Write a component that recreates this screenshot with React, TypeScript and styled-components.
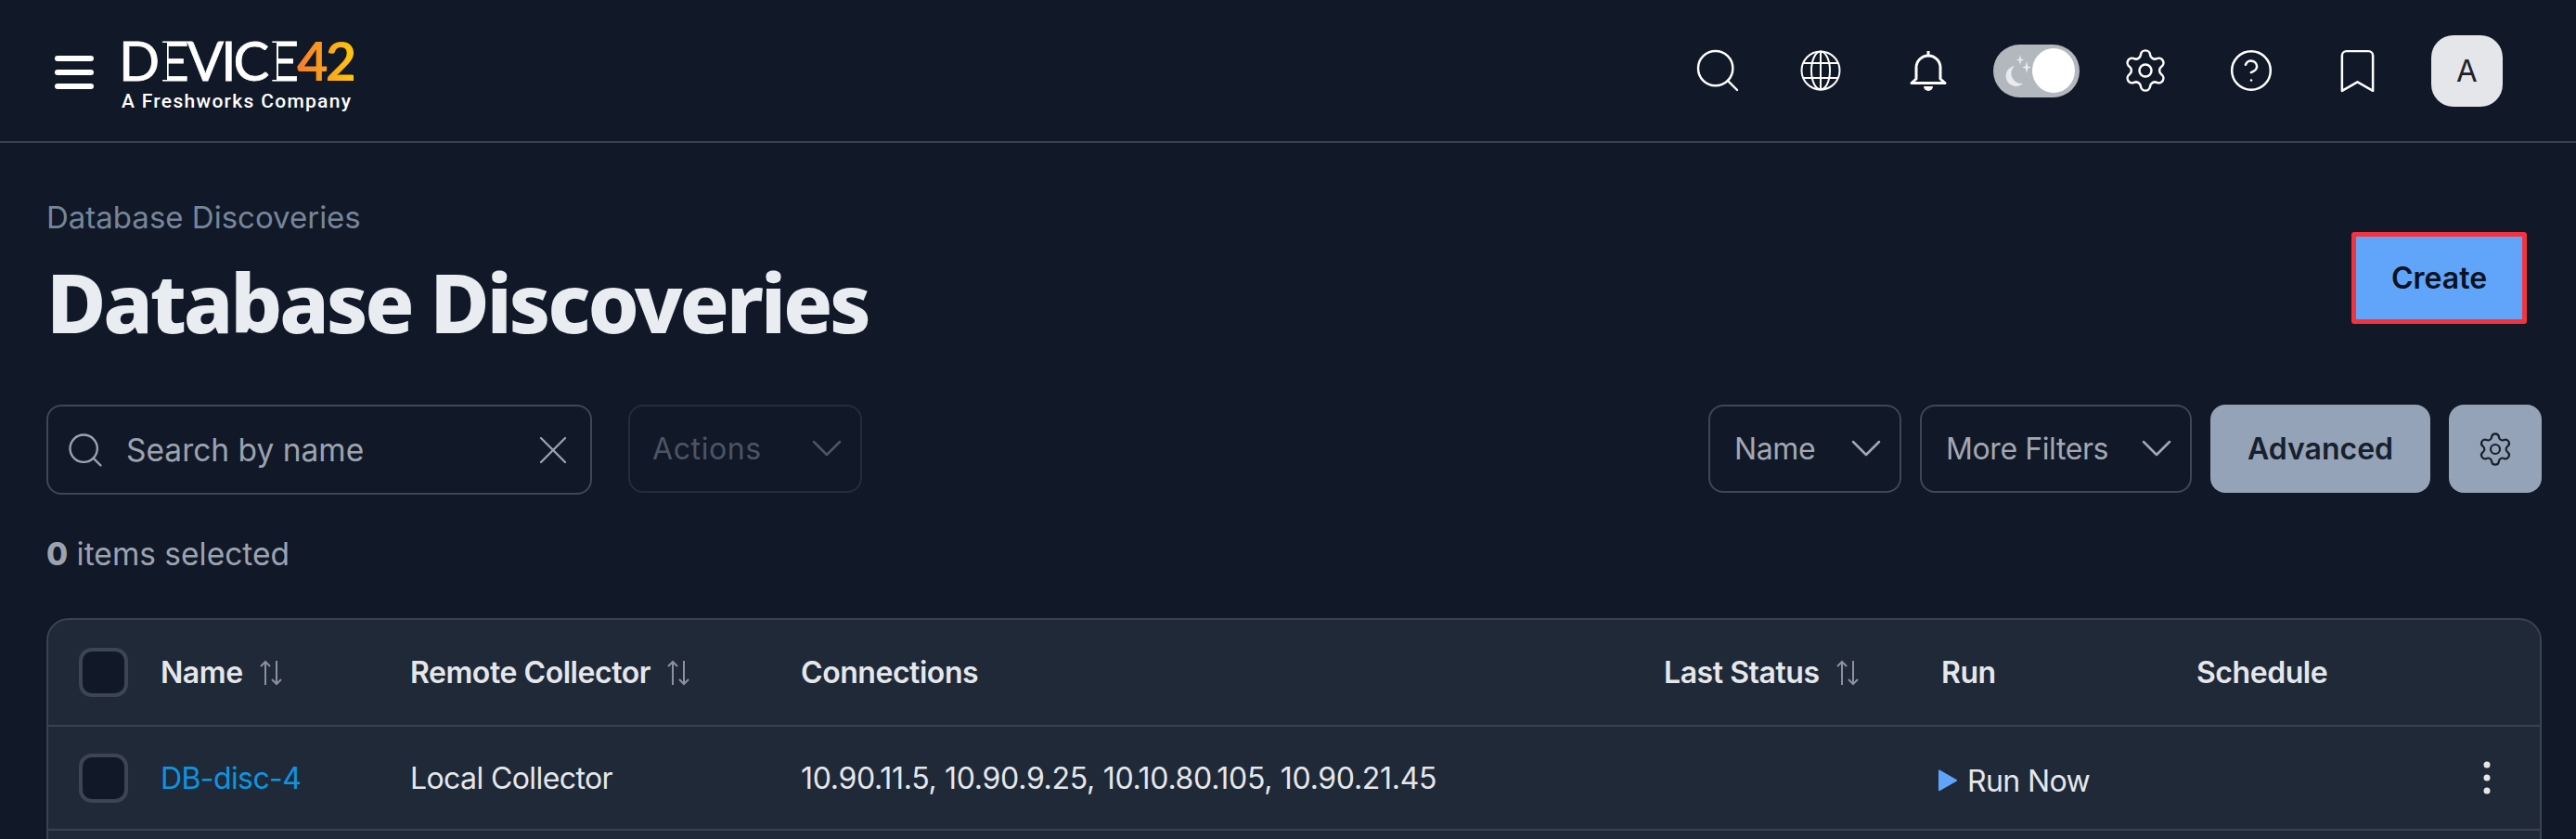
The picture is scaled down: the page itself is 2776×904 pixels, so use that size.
import React from 'react';
import styled, { createGlobalStyle } from 'styled-components';
import { ChevronDown, CircleHelp, Bookmark, Search, Settings, X } from 'lucide-react';

const GlobalStyle = createGlobalStyle`
    html, body {
        margin: 0;
        height: 904px;
        overflow: hidden;
        background: #111827;
    }
    * {
        box-sizing: border-box;
    }
    svg {
        flex-shrink: 0;
    }
`;

const Page = styled.div`
    width: 2776px;
    height: 904px;
    overflow: hidden;
    background: #111827;
    color: #e5e7eb;
    font-family: 'Inter', 'Liberation Sans', sans-serif;
`;

const Header = styled.header`
    display: flex;
    align-items: center;
    justify-content: space-between;
    height: 154px;
    padding: 0 79px 0 59px;
    border-bottom: 2px solid #3a4150;
`;

const Brand = styled.div`
    display: flex;
    align-items: center;
    gap: 30px;
`;

const Burger = styled.div`
    display: grid;
    gap: 9px;
    width: 42px;
    margin-top: 4px;
`;

const BurgerBar = styled.span`
    display: block;
    height: 6px;
    border-radius: 3px;
    background: #fff;
`;

const Logo = styled.div`
    display: flex;
    flex-direction: column;
    width: 252px;
    margin-top: 8px;
`;

const LogoMark = styled.div`
    display: flex;
    align-items: baseline;
    height: 50px;
    margin-left: -3px;
    line-height: 50px;
    font-family: 'Lato', sans-serif;
    font-size: 58px;
    font-weight: 400;
    color: #fff;
    letter-spacing: -2.900px;
    -webkit-text-stroke: 0.8px #fff;
`;

const LogoE = styled.span`
    position: relative;
    margin: 0 1px;

    &::before {
        content: '';
        position: absolute;
        left: 2px;
        top: 6px;
        bottom: 4px;
        width: 8px;
        background: #111827;
    }
`;

const LogoNumber = styled.span`
    font-weight: 700;
    background: linear-gradient(90deg, #f47c2c 0%, #ffc60b 100%);
    -webkit-background-clip: text;
    background-clip: text;
    color: transparent;
    -webkit-text-stroke: 0;
`;

const LogoTag = styled.div`
    margin-top: 7px;
    font-family: 'Roboto', sans-serif;
    font-size: 21px;
    font-weight: 500;
    letter-spacing: 1.300px;
    white-space: nowrap;
    color: #fff;
`;

const Tools = styled.div`
    display: flex;
    align-items: center;
`;

const ToolSlot = styled.div<{ $gap: number }>`
    display: flex;
    justify-content: center;
    width: 44px;
    margin-left: ${(p) => p.$gap}px;
    color: #fff;
`;

const Toggle = styled.div`
    display: flex;
    align-items: center;
    justify-content: space-between;
    width: 93px;
    height: 57px;
    margin-left: 48px;
    padding: 0 5px 0 12px;
    border-radius: 29px;
    background: #b3b7be;
`;

const ToggleKnob = styled.span`
    width: 48px;
    height: 48px;
    border-radius: 50%;
    background: #fff;
`;

const Avatar = styled.div`
    display: flex;
    align-items: center;
    justify-content: center;
    width: 77px;
    height: 77px;
    margin-left: 58px;
    border-radius: 24px;
    background: #e5e6ea;
    color: #1f2328;
    font-size: 33px;
    font-weight: 400;
`;

const Content = styled.main`
    padding: 60px 37px 0 50px;
`;

const TitleRow = styled.div`
    display: flex;
    justify-content: space-between;
    align-items: flex-start;
`;

const Crumb = styled.div`
    font-size: 33px;
    line-height: 40px;
    color: #76869a;
`;

const Title = styled.h1`
    margin: 18px 0 0;
    font-family: 'Noto Sans', sans-serif;
    font-size: 88px;
    line-height: 106px;
    font-weight: 800;
    letter-spacing: -3.200px;
    color: #e9ecf1;
`;

const CreateButton = styled.button`
    width: 189px;
    height: 99px;
    margin: 36px 16px 0 0;
    border: 5px solid #f5333f;
    border-radius: 3px;
    background: #60a5fa;
    color: #0b1220;
    font-family: inherit;
    font-size: 32px;
    font-weight: 600;
`;

const Controls = styled.div`
    display: flex;
    align-items: flex-start;
    justify-content: space-between;
    margin-top: 58px;
`;

const ControlGroup = styled.div`
    display: flex;
    align-items: flex-start;
    gap: 20px;
`;

const LeftGroup = styled(ControlGroup)`
    gap: 39px;
`;

const SearchBox = styled.div`
    display: flex;
    align-items: center;
    width: 588px;
    height: 97px;
    padding: 0 14px 0 18px;
    border: 2px solid #3f4654;
    border-radius: 16px;
    color: #9ca3af;
    font-size: 33.500px;
`;

const SearchText = styled.span`
    flex: 1;
    margin-left: 22px;
`;

const Select = styled.div<{ $w: number; $muted?: boolean }>`
    display: flex;
    align-items: center;
    justify-content: space-between;
    width: ${(p) => p.$w}px;
    height: 95px;
    padding: 0 8px 1px 26px;
    border: 2px solid ${(p) => (p.$muted ? '#262d3a' : '#3f4654')};
    border-radius: 16px;
    color: ${(p) => (p.$muted ? '#4b5563' : '#a3a8b1')};
    font-size: 32px;
    letter-spacing: ${(p) => (p.$muted ? '0.6px' : '-0.4px')};
`;

const ActionsSelect = styled(Select)`
    padding-left: 24px;
`;

const GhostButton = styled.button<{ $w: number }>`
    display: flex;
    align-items: center;
    justify-content: center;
    width: ${(p) => p.$w}px;
    height: 95px;
    border: 0;
    border-radius: 16px;
    background: #94a3b8;
    color: #17202c;
    font-family: inherit;
    font-size: 32px;
    font-weight: 600;
`;

const SelectedCount = styled.div`
    margin-top: 43px;
    font-size: 33.500px;
    line-height: 42px;
    color: #9ca3af;
`;

const Count = styled.b`
    font-weight: 800;
`;

const Table = styled.div`
    min-height: 300px;
    margin-top: 48px;
    border: 2px solid #3a4250;
    border-radius: 24px 24px 0 0;
    background: #1f2937;
`;

const TableRow = styled.div<{ $h: number }>`
    display: grid;
    grid-template-columns: 121px 269px 421px 930px 299px 275px 1fr;
    align-items: center;
    height: ${(p) => p.$h}px;
    border-bottom: 2px solid #3a4250;
    font-size: 32px;
    letter-spacing: -0.6px;
`;

const CheckCell = styled.div`
    display: flex;
    padding-left: 33px;
`;

const CheckBox = styled.span`
    width: 53px;
    height: 53px;
    border: 4px solid #3b4553;
    border-radius: 14px;
    background: #111827;
`;

const HeadCell = styled.div`
    display: flex;
    align-items: center;
    gap: 18px;
    font-weight: 600;
    letter-spacing: -0.45px;
    color: #e5e7eb;
`;

const Cell = styled.div`
    color: #e5e7eb;
    white-space: nowrap;
`;

const ConnectionsCell = styled(Cell)`
    letter-spacing: -0.3px;
`;

const NameLink = styled.a`
    color: #0d95e0;
`;

const RunCell = styled.div`
    display: flex;
    align-items: center;
    gap: 10px;
    margin-left: -4px;
    padding-top: 6px;
    color: #e5e7eb;
`;

const RowMenu = styled.div`
    display: flex;
    justify-content: flex-end;
    padding: 0 53px 0 0;
`;

const MoonStars = () => (
    <svg width="30" height="36" viewBox="0 0 30 36" fill="#e9eaed">
        <path d="M11 13a11 11 0 1 0 9 19a11 11 0 0 1-9-19z" />
        <path d="M17 1l1.100 4.400 3.400 1.100-3.400 1.100-1.100 4.400-1.100-4.400-3.400-1.100 3.400-1.100z" />
        <path d="M24 8l1.300 5.200 3.700 1.300-3.700 1.300-1.300 5.200-1.300-5.200-3.700-1.300 3.700-1.300z" />
    </svg>
);

const GlobeIcon = () => (
    <svg width="44" height="44" viewBox="0 0 44 44" fill="none" stroke="currentColor" strokeWidth="2">
        <circle cx="22" cy="22" r="20.500" />
        <ellipse cx="22" cy="22" rx="10" ry="20.500" />
        <path d="M22 1.500v41M3.500 14h37M3.500 30h37" />
    </svg>
);

const BellIcon = () => (
    <svg width="40" height="44" viewBox="0 0 40 44" fill="none" stroke="currentColor" strokeWidth="3" strokeLinejoin="round">
        <path d="M20 1v5" />
        <path d="M7 31V19a13 13 0 0 1 26 0v12l5 4.500H2z" />
        <path d="M15 39h10a5 5 0 0 1-10 0z" fill="currentColor" stroke="none" />
    </svg>
);

const SortIcon = () => (
    <svg width="24" height="28" viewBox="0 0 24 28" fill="none" stroke="#8b929d" strokeWidth="2">
        <path d="M6 27V2M1 7l5-5 5 5" />
        <path d="M18 1v25M13 21l5 5 5-5" />
    </svg>
);

const RunIcon = () => (
    <svg width="22" height="24" viewBox="0 0 22 24" fill="#60a5fa">
        <path d="M1 1.500a1 1 0 0 1 1.500-.8l18 10.300a1 1 0 0 1 0 1.800l-18 10.300a1 1 0 0 1-1.500-.8z" />
    </svg>
);

const KebabIcon = () => (
    <svg width="8" height="36" viewBox="0 0 8 36" fill="#e5e7eb">
        <circle cx="4" cy="4" r="3.500" />
        <circle cx="4" cy="18" r="3.500" />
        <circle cx="4" cy="32" r="3.500" />
    </svg>
);

const App = () => {
    return (
        <Page>
            <GlobalStyle />
            <Header>
                <Brand>
                    <Burger>
                        <BurgerBar />
                        <BurgerBar />
                        <BurgerBar />
                    </Burger>
                    <Logo>
                        <LogoMark>
                            D<LogoE>E</LogoE>VIC<LogoE>E</LogoE><LogoNumber>42</LogoNumber>
                        </LogoMark>
                        <LogoTag>A Freshworks Company</LogoTag>
                    </Logo>
                </Brand>
                <Tools>
                    <ToolSlot $gap={0}><Search size={56} strokeWidth={1.050} /></ToolSlot>
                    <ToolSlot $gap={67}><GlobeIcon /></ToolSlot>
                    <ToolSlot $gap={72}><BellIcon /></ToolSlot>
                    <Toggle><MoonStars /><ToggleKnob /></Toggle>
                    <ToolSlot $gap={49}><Settings size={52} strokeWidth={1.150} /></ToolSlot>
                    <ToolSlot $gap={70}><CircleHelp size={50} strokeWidth={1.200} /></ToolSlot>
                    <ToolSlot $gap={70}><Bookmark size={57} strokeWidth={1.050} /></ToolSlot>
                    <Avatar>A</Avatar>
                </Tools>
            </Header>
            <Content>
                <TitleRow>
                    <div>
                        <Crumb>Database Discoveries</Crumb>
                        <Title>Database Discoveries</Title>
                    </div>
                    <CreateButton>Create</CreateButton>
                </TitleRow>
                <Controls>
                    <LeftGroup>
                        <SearchBox>
                            <Search size={44} strokeWidth={1.300} />
                            <SearchText>Search by name</SearchText>
                            <X size={52} strokeWidth={1.100} />
                        </SearchBox>
                        <ActionsSelect $w={252} $muted>
                            Actions
                            <ChevronDown size={56} strokeWidth={1.100} />
                        </ActionsSelect>
                    </LeftGroup>
                    <ControlGroup>
                        <Select $w={208}>
                            Name
                            <ChevronDown size={56} strokeWidth={1.100} />
                        </Select>
                        <Select $w={293}>
                            More Filters
                            <ChevronDown size={56} strokeWidth={1.100} />
                        </Select>
                        <GhostButton $w={237}>Advanced</GhostButton>
                        <GhostButton $w={100}><Settings size={40} strokeWidth={1.300} /></GhostButton>
                    </ControlGroup>
                </Controls>
                <SelectedCount><Count>0</Count> items selected</SelectedCount>
                <Table>
                    <TableRow $h={115}>
                        <CheckCell><CheckBox /></CheckCell>
                        <HeadCell>Name <SortIcon /></HeadCell>
                        <HeadCell>Remote Collector <SortIcon /></HeadCell>
                        <HeadCell>Connections</HeadCell>
                        <HeadCell>Last Status <SortIcon /></HeadCell>
                        <HeadCell>Run</HeadCell>
                        <HeadCell>Schedule</HeadCell>
                    </TableRow>
                    <TableRow $h={112}>
                        <CheckCell><CheckBox /></CheckCell>
                        <Cell><NameLink>DB-disc-4</NameLink></Cell>
                        <Cell>Local Collector</Cell>
                        <ConnectionsCell>10.90.11.5, 10.90.9.25, 10.10.80.105, 10.90.21.45</ConnectionsCell>
                        <Cell />
                        <RunCell><RunIcon />Run Now</RunCell>
                        <RowMenu><KebabIcon /></RowMenu>
                    </TableRow>
                </Table>
            </Content>
        </Page>
    );
};

export default App;
